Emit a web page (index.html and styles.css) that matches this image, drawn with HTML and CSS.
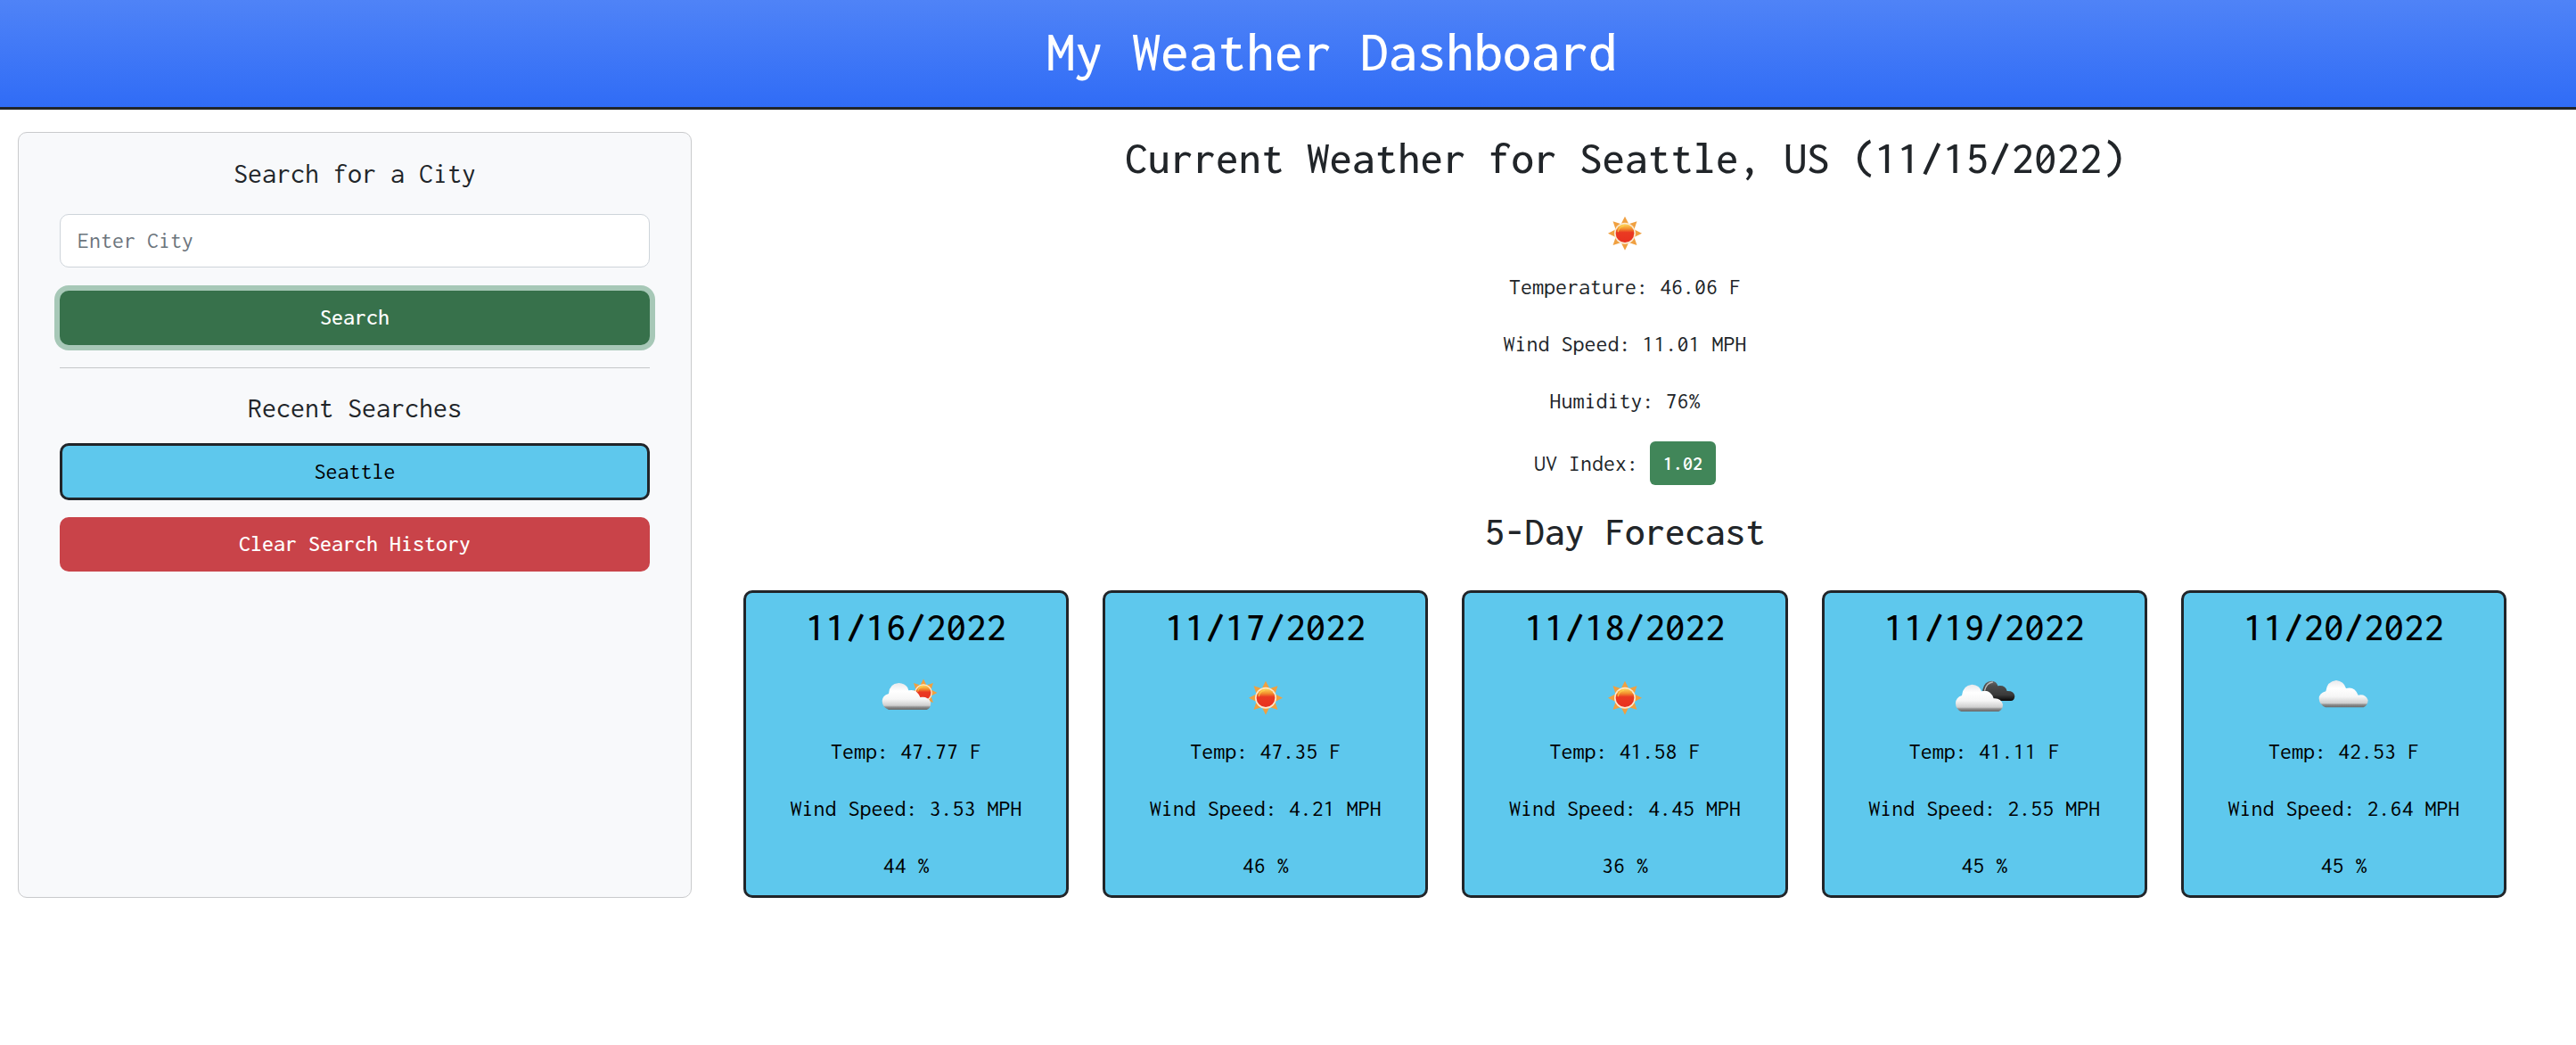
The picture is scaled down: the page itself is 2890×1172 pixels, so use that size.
FILE: index.html
```html
<!DOCTYPE html>
<html lang="en">
<head>
<meta charset="utf-8">
<meta name="viewport" content="width=device-width, initial-scale=1">
<title>My Weather Dashboard</title>
<link rel="stylesheet" href="styles.css">
</head>
<body>
<svg class="sprite" aria-hidden="true">
  <defs>
    <linearGradient id="disc" x1="0" y1="0" x2="0" y2="1">
      <stop offset="0" stop-color="#ffd75e"/>
      <stop offset=".25" stop-color="#f3922f"/>
      <stop offset=".45" stop-color="#ea3a22"/>
      <stop offset="1" stop-color="#e8301f"/>
    </linearGradient>
    <linearGradient id="cloud" x1="0" y1="0" x2="0" y2="1">
      <stop offset="0" stop-color="#e9e9ec"/>
      <stop offset=".3" stop-color="#ffffff"/>
      <stop offset=".6" stop-color="#f6f6f6"/>
      <stop offset=".84" stop-color="#cfcfcf"/>
      <stop offset=".9" stop-color="#8f8f8f"/>
      <stop offset="1" stop-color="#666666"/>
    </linearGradient>
    <linearGradient id="storm" x1="0" y1="0" x2="0" y2="1">
      <stop offset="0" stop-color="#6a6a6a"/>
      <stop offset=".25" stop-color="#4c4c4c"/>
      <stop offset=".7" stop-color="#3a3a3a"/>
      <stop offset="1" stop-color="#080808"/>
    </linearGradient>
    <symbol id="sun" viewBox="-60 -60 120 120">
      <g fill="#f0a040">
        <path d="M0-57 13-31H-13Z"/>
        <path d="M0-57 13-31H-13Z" transform="rotate(45)"/>
        <path d="M0-57 13-31H-13Z" transform="rotate(90)"/>
        <path d="M0-57 13-31H-13Z" transform="rotate(135)"/>
        <path d="M0-57 13-31H-13Z" transform="rotate(180)"/>
        <path d="M0-57 13-31H-13Z" transform="rotate(225)"/>
        <path d="M0-57 13-31H-13Z" transform="rotate(270)"/>
        <path d="M0-57 13-31H-13Z" transform="rotate(315)"/>
      </g>
      <circle r="36" fill="#fbe9cf"/>
      <circle r="31" fill="url(#disc)"/>
      <path d="M-23-6Q-20-23-4-25" fill="none" stroke="#ffd54a" stroke-width="4" stroke-linecap="round" opacity=".7"/>
    </symbol>
  </defs>
</svg>

<header class="topbar">
  <h1 class="topbar-title">My Weather Dashboard</h1>
</header>

<div class="layout">
  <aside class="sidebar">
    <form class="search">
      <label class="panel-title" for="city">Search for a City</label>
      <input class="field" id="city" type="text" placeholder="Enter City">
      <button class="btn btn-search" type="button">Search</button>
    </form>
    <hr class="rule">
    <section class="recent">
      <h2 class="panel-title">Recent Searches</h2>
      <button class="btn btn-city" type="button">Seattle</button>
      <button class="btn btn-clear" type="button">Clear Search History</button>
    </section>
  </aside>

  <main class="weather">
    <section class="current">
      <h2 class="current-title">Current Weather for Seattle, US (11/15/2022)</h2>
      <svg class="icon icon-current" viewBox="9 6 240 180" role="img" aria-label="Clear sky"><use href="#sun" x="69" y="35" width="120" height="120"/></svg>
      <p class="stat">Temperature: 46.06 F</p>
      <p class="stat">Wind Speed: 11.01 MPH</p>
      <p class="stat">Humidity: 76%</p>
      <p class="uv">UV Index: <span class="badge">1.02</span></p>
    </section>

    <h2 class="forecast-title">5-Day Forecast</h2>
    <section class="forecast">
      <article class="day">
        <h3 class="day-date">11/16/2022</h3>
        <svg class="icon icon-day" viewBox="50 30 240 180" role="img" aria-label="Partly cloudy">
          <use href="#sun" x="178" y="62" width="98" height="98"/>
          <path d="M110 168Q88 160 88 138Q89 120 110 114Q112 80 144 78Q172 80 177 103Q204 96 216 126Q242 122 251 142Q254 162 238 168Z" fill="url(#cloud)"/>
        </svg>
        <p class="stat">Temp: 47.77 F</p>
        <p class="stat">Wind Speed: 3.53 MPH</p>
        <p class="stat">44 %</p>
      </article>
      <article class="day">
        <h3 class="day-date">11/17/2022</h3>
        <svg class="icon icon-day" viewBox="0 30 240 180" role="img" aria-label="Clear sky"><use href="#sun" x="60" y="68" width="120" height="120"/></svg>
        <p class="stat">Temp: 47.35 F</p>
        <p class="stat">Wind Speed: 4.21 MPH</p>
        <p class="stat">46 %</p>
      </article>
      <article class="day">
        <h3 class="day-date">11/18/2022</h3>
        <svg class="icon icon-day" viewBox="0 30 240 180" role="img" aria-label="Clear sky"><use href="#sun" x="60" y="68" width="120" height="120"/></svg>
        <p class="stat">Temp: 41.58 F</p>
        <p class="stat">Wind Speed: 4.45 MPH</p>
        <p class="stat">36 %</p>
      </article>
      <article class="day">
        <h3 class="day-date">11/19/2022</h3>
        <svg class="icon icon-day" viewBox="49 30 240 180" role="img" aria-label="Broken clouds">
          <path d="M164 138V100Q170 72 194 71Q211 72 215 88Q240 84 246 105Q270 104 272 122Q271 138 258 138Z" fill="url(#storm)"/>
          <path d="M171 102Q177 78 197 75" fill="none" stroke="#bdbdbd" stroke-width="4" stroke-linecap="round"/>
          <path d="M92 174Q73 166 73 146Q74 126 94 120Q97 86 128 83Q154 85 160 106Q190 98 201 130Q226 128 232 150Q232 168 218 174Z" fill="url(#cloud)"/>
        </svg>
        <p class="stat">Temp: 41.11 F</p>
        <p class="stat">Wind Speed: 2.55 MPH</p>
        <p class="stat">45 %</p>
      </article>
      <article class="day">
        <h3 class="day-date">11/20/2022</h3>
        <svg class="icon icon-day" viewBox="58 30 240 180" role="img" aria-label="Cloudy">
          <path d="M118 160Q97 152 96 130Q97 112 119 106Q123 72 154 69Q180 72 187 96Q216 88 228 119Q252 114 261 136Q260 154 246 160Z" fill="url(#cloud)"/>
        </svg>
        <p class="stat">Temp: 42.53 F</p>
        <p class="stat">Wind Speed: 2.64 MPH</p>
        <p class="stat">45 %</p>
      </article>
    </section>
  </main>
</div>
</body>
</html>
```

FILE: styles.css
```css
*,
*::before,
*::after {
  box-sizing: border-box;
}

body {
  margin: 0;
  background: #fff;
  color: #212529;
  font-family: Inconsolata, "Liberation Mono", monospace;
  font-size: 26px;
  line-height: 38px;
}

h1,
h2,
h3,
p {
  margin: 0;
}

h1,
h2,
h3 {
  font-weight: 500;
}

.sprite {
  position: absolute;
  width: 0;
  height: 0;
}

.topbar {
  padding: 20px 0 24px 98px;
  border-bottom: 3px solid #212529;
  background: linear-gradient(#4f83f7, #306cf6);
  color: #fff;
  text-align: center;
}

.topbar-title {
  font-size: 64px;
  line-height: 76px;
}

.layout {
  display: grid;
  grid-template-columns: 756fr 1978fr;
  gap: 58px;
  padding: 25px 78px 25px 20px;
}

.sidebar {
  padding: 27px 46px;
  border: 1px solid #c9cacc;
  border-radius: 10px;
  background: #f8f9fb;
}

.search,
.recent {
  display: flex;
  flex-direction: column;
}

.panel-title {
  font-size: 32px;
  font-weight: 400;
  line-height: 38px;
  text-align: center;
}

.field {
  width: 100%;
  height: 60px;
  margin: 26px 0;
  padding: 0 19px 2px;
  border: 1px solid #ced4da;
  border-radius: 10px;
  background: #fff;
  color: #212529;
  font: inherit;
}

.field::placeholder {
  color: #6c757d;
  opacity: 1;
}

.btn {
  width: 100%;
  height: 61px;
  padding: 0 19px 2px;
  border: 0;
  border-radius: 10px;
  font: inherit;
  font-weight: 500;
  text-align: center;
}

.btn-search {
  background: #37714b;
  box-shadow: 0 0 0 6px #a7c8b7;
  color: #fff;
}

.rule {
  height: 1px;
  margin: 25px 0 26px;
  border: 0;
  background: #c5c7c9;
}

.btn-city {
  height: 64px;
  margin: 20px 0 19px;
  padding-bottom: 0;
  border: 3px solid #212529;
  background: #5ec8ed;
  color: #000;
  font-weight: 400;
}

.btn-clear {
  background: #c94349;
  color: #fff;
}

.current {
  display: flex;
  flex-direction: column;
  align-items: center;
  padding-top: 3px;
}

.current-title {
  font-size: 51px;
  line-height: 52px;
}

.icon {
  width: 80px;
  height: 60px;
}

.icon-current {
  margin: 29px 0 11px;
}

.stat {
  line-height: 38px;
}

.stat + .stat {
  margin-top: 26px;
}

.uv {
  display: flex;
  align-items: center;
  gap: 13px;
  margin-top: 26px;
}

.badge {
  padding: 6px 15px 5px;
  border-radius: 6px;
  background: #418659;
  color: #fff;
  font-size: 22px;
  font-weight: 600;
}

.forecast-title {
  margin: 30px 0 44px;
  font-size: 45px;
  line-height: 44px;
  text-align: center;
}

.forecast {
  display: grid;
  grid-template-columns: repeat(5, 1fr);
  gap: 38px;
}

.day {
  display: flex;
  flex-direction: column;
  align-items: center;
  padding: 16px 16px 14px;
  border: 3px solid #212529;
  border-radius: 10px;
  background: #5ec8ed;
  color: #000;
}

.day-date {
  font-size: 45px;
  line-height: 44px;
}

.icon-day {
  margin: 25px 0 14px;
}
```
